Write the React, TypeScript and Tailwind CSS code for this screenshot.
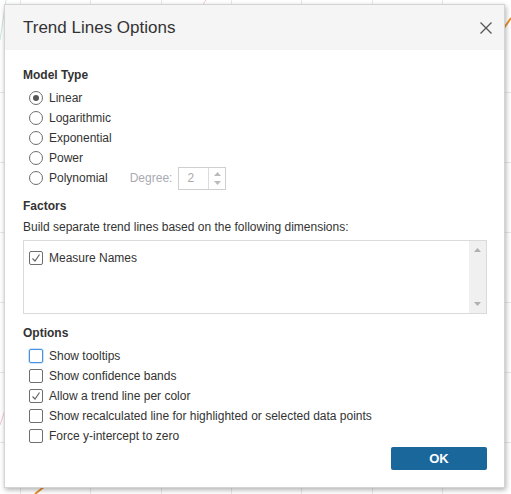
import React from 'react';

const font = { fontFamily: '"Liberation Sans", Arial, sans-serif' };

const Radio = ({ checked }: { checked?: boolean }) => (
  <span className="flex h-[14px] w-[14px] items-center justify-center rounded-full border border-[#6f6f6f] bg-white">
    {checked && <span className="h-[6px] w-[6px] rounded-full bg-[#555]" />}
  </span>
);

const Check = ({ checked, focused }: { checked?: boolean; focused?: boolean }) => (
  <span
    className={
      focused
        ? 'flex h-[14px] w-[14px] items-center justify-center rounded-[2px] border border-[#4a90e2] bg-white shadow-[0_0_0_1px_#cfe3f8]'
        : 'flex h-[14px] w-[14px] items-center justify-center rounded-[2px] border border-[#6f6f6f] bg-white'
    }
  >
    {checked && (
      <svg width="10" height="10" viewBox="0 0 10 10">
        <path d="M1.5 5.5 L4 8 L8.5 1.5" fill="none" stroke="#666" strokeWidth="1.2" />
      </svg>
    )}
  </span>
);

const ChartBackdrop = () => (
  <svg className="absolute inset-0" width="511" height="494">
    {[20, 90, 161, 231, 301, 372, 442].map((x) => (
      <line key={'v' + x} x1={x + 0.5} y1="0" x2={x + 0.5} y2="494" stroke="#e8e8e8" />
    ))}
    {[92, 162, 232, 302, 372, 442].map((y) => (
      <line key={'h' + y} x1="0" y1={y + 0.5} x2="511" y2={y + 0.5} stroke="#e8e8e8" />
    ))}
    <line x1="0" y1="40" x2="6" y2="0" stroke="#cde6df" strokeWidth="1" />
    <line x1="198" y1="12" x2="206" y2="0" stroke="#f3c6cf" strokeWidth="1" />
    <line x1="0" y1="425" x2="10" y2="395" stroke="#f3c6cf" strokeWidth="1" />
    <line x1="504" y1="28" x2="511" y2="18" stroke="#e8912d" strokeWidth="2" />
    <line x1="35" y1="494" x2="45" y2="486" stroke="#e8912d" strokeWidth="2" />
  </svg>
);

const models = ['Linear', 'Logarithmic', 'Exponential', 'Power'];
const options = [
  { label: 'Show tooltips', focused: true },
  { label: 'Show confidence bands' },
  { label: 'Allow a trend line per color', checked: true },
  { label: 'Show recalculated line for highlighted or selected data points' },
  { label: 'Force y-intercept to zero' },
];

export default function App() {
  return (
    <div className="relative h-[494px] w-[511px] overflow-hidden bg-white text-[12px] text-[#333]" style={font}>
      <ChartBackdrop />

      {/* Dialog */}
      <div className="absolute left-[4px] top-[4px] flex h-[484px] w-[501px] flex-col border border-[#d4d4d4] bg-white shadow-[1px_2px_5px_rgba(0,0,0,0.3)]">
        <div className="flex h-[45px] shrink-0 items-center justify-between bg-[#f5f5f5] pl-[18px] pr-[11px]">
          <span className="text-[17px] text-[#333]">Trend Lines Options</span>
          <svg width="14" height="14" viewBox="0 0 14 14">
            <path d="M1.5 1.5 L12.5 12.5 M12.5 1.5 L1.5 12.5" stroke="#555" strokeWidth="1.3" fill="none" />
          </svg>
        </div>

        <div className="flex flex-col pl-[18px] pr-[17px] pt-[15px]">
          <div className="flex h-[20px] items-center font-bold">Model Type</div>
          <div className="mt-[3px] flex flex-col pl-[6px]">
            {models.map((m, i) => (
              <div key={m} className="flex h-[20px] items-center gap-[6px]">
                <Radio checked={i === 0} />
                <span>{m}</span>
              </div>
            ))}
            <div className="flex h-[20px] items-center">
              <span className="flex items-center gap-[6px]">
                <Radio />
                <span>Polynomial</span>
              </span>
              <span className="ml-[22px] text-[#aaaab2]">Degree:</span>
              <span className="ml-[6px] flex h-[23px] w-[48px] border border-[#cfcfcf] bg-white">
                <span className="flex flex-1 items-center pl-[8px] text-[#aaa]">2</span>
                <span className="flex w-[17px] flex-col items-center justify-between border-l border-[#dcdcdc] py-[4px]">
                  <svg width="7" height="4" viewBox="0 0 7 4"><path d="M0 4 L3.5 0 L7 4 Z" fill="#bbb" /></svg>
                  <svg width="7" height="4" viewBox="0 0 7 4"><path d="M0 0 L3.5 4 L7 0 Z" fill="#bbb" /></svg>
                </span>
              </span>
            </div>
          </div>

          <div className="mt-[8px] flex h-[20px] items-center font-bold">Factors</div>
          <div className="mt-[1px] flex h-[20px] items-center">Build separate trend lines based on the following dimensions:</div>
          <div className="mt-[3px] flex h-[74px] border border-[#dadada]">
            <div className="flex flex-1 items-start px-[5px] pt-[8px]">
              <span className="flex items-center gap-[6px]">
                <Check checked />
                <span>Measure Names</span>
              </span>
            </div>
            <div className="flex w-[17px] flex-col items-center justify-between bg-[#f0f0f0] py-[7px]">
              <svg width="7" height="4" viewBox="0 0 7 4"><path d="M0 4 L3.5 0 L7 4 Z" fill="#b0b0b0" /></svg>
              <svg width="7" height="4" viewBox="0 0 7 4"><path d="M0 0 L3.5 4 L7 0 Z" fill="#b0b0b0" /></svg>
            </div>
          </div>

          <div className="mt-[9px] flex h-[20px] items-center font-bold">Options</div>
          <div className="mt-[3px] flex flex-col pl-[6px]">
            {options.map((o) => (
              <div key={o.label} className="flex h-[20px] items-center gap-[6px]">
                <Check checked={o.checked} focused={o.focused} />
                <span>{o.label}</span>
              </div>
            ))}
          </div>

          <div className="mt-[1px] flex justify-end">
            <button className="h-[23px] w-[96px] rounded-[2px] bg-[#1a679c] text-[13px] font-bold text-white">OK</button>
          </div>
        </div>
      </div>
    </div>
  );
}
